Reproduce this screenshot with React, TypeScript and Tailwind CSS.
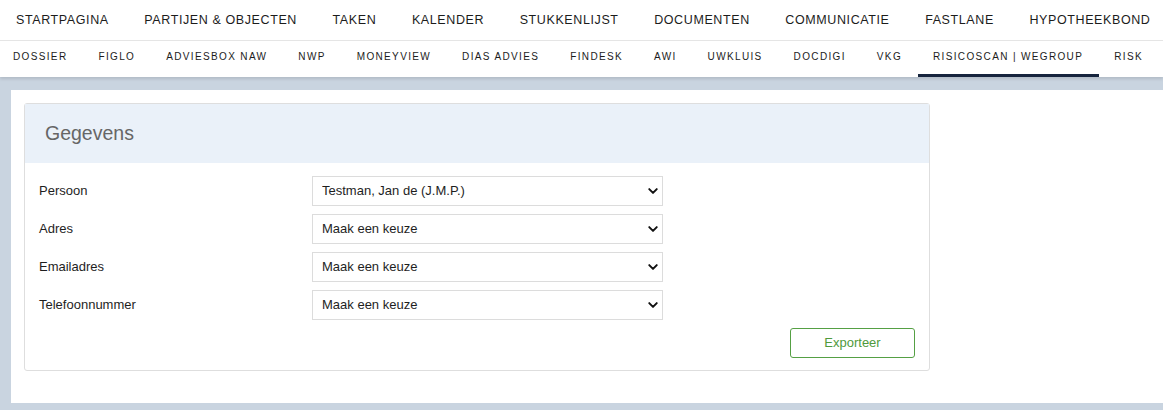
import React from "react";

const mainNav = [
  "Startpagina",
  "Partijen & objecten",
  "Taken",
  "Kalender",
  "Stukkenlijst",
  "Documenten",
  "Communicatie",
  "Fastlane",
  "Hypotheekbond",
];

const subNav = [
  "Dossier",
  "Figlo",
  "Adviesbox NAW",
  "NWP",
  "Moneyview",
  "Dias advies",
  "Findesk",
  "AWI",
  "Uwkluis",
  "Docdigi",
  "VKG",
  "Risicoscan | Wegroup",
  "Risk",
];

const fields = [
  { label: "Persoon", value: "Testman, Jan de (J.M.P.)" },
  { label: "Adres", value: "Maak een keuze" },
  { label: "Emailadres", value: "Maak een keuze" },
  { label: "Telefoonnummer", value: "Maak een keuze" },
];

const Chevron = () => (
  <svg
    className="pointer-events-none absolute right-[4px] top-1/2 -translate-y-1/2"
    width="12"
    height="12"
    viewBox="0 0 16 16"
    fill="none"
  >
    <path d="M3 5.5l5 5 5-5" stroke="#111" strokeWidth="2.6" strokeLinecap="round" strokeLinejoin="round" />
  </svg>
);

export default function App() {
  return (
    <div className="min-h-[410px] bg-[#c9d4e0] font-['Liberation_Sans',Arial,sans-serif]">
      {/* hoofdmenu */}
      <nav className="flex h-[41px] items-center gap-[35.6px] border-b border-[#e6e6e6] bg-white pl-[16px] text-[12.5px] uppercase tracking-[0.6px] text-[#1c1c1c] whitespace-nowrap overflow-hidden">
        {mainNav.map((item) => (
          <span key={item}>{item}</span>
        ))}
      </nav>

      {/* submenu */}
      <nav className="relative flex h-[36px] items-stretch bg-white text-[10px] uppercase tracking-[1.35px] text-[#1c1c1c] whitespace-nowrap overflow-hidden shadow-[0_2px_3px_rgba(0,0,0,0.12)]">
        {subNav.map((item, i) => (
          <span
            key={item}
            className={`flex items-center border-b-[3px] px-[15.5px] pb-[2px] ${i === 0 ? "pl-[13px]" : ""} ${
              item.startsWith("Risicoscan") ? "border-[#16243d]" : "border-transparent"
            }`}
          >
            {item}
          </span>
        ))}
      </nav>

      {/* inhoud */}
      <div className="pt-[13px] pb-[7px] pl-[11px]">
        <div className="h-[313px] bg-white pt-[13px] pl-[13px]">
          <div className="w-[906px] rounded-[3px] border border-[#dedede]">
            <div className="flex h-[59px] items-center bg-[#eaf1f9] pl-[20px] text-[19.5px] text-[#666]">
              Gegevens
            </div>
            <div className="px-[14px] pt-[13px] pb-[12px]">
              <div className="flex flex-col gap-[8px]">
                {fields.map((f) => (
                  <div key={f.label} className="flex items-start">
                    <label className="w-[273px] pt-[5px] text-[13px] text-[#1e1e1e]">{f.label}</label>
                    <div className="relative w-[351px]">
                      <select
                        defaultValue={f.value}
                        className="h-[30px] w-full appearance-none border border-[#dcdcdc] bg-white pl-[9px] text-[13px] text-[#1e1e1e] outline-none"
                      >
                        <option>{f.value}</option>
                      </select>
                      <Chevron />
                    </div>
                  </div>
                ))}
              </div>
              <div className="mt-[8px] flex justify-end">
                <button className="h-[30px] w-[125px] rounded-[3px] border border-[#55a044] bg-white text-[13px] text-[#4f9a3c]">
                  Exporteer
                </button>
              </div>
            </div>
          </div>
        </div>
      </div>
    </div>
  );
}
